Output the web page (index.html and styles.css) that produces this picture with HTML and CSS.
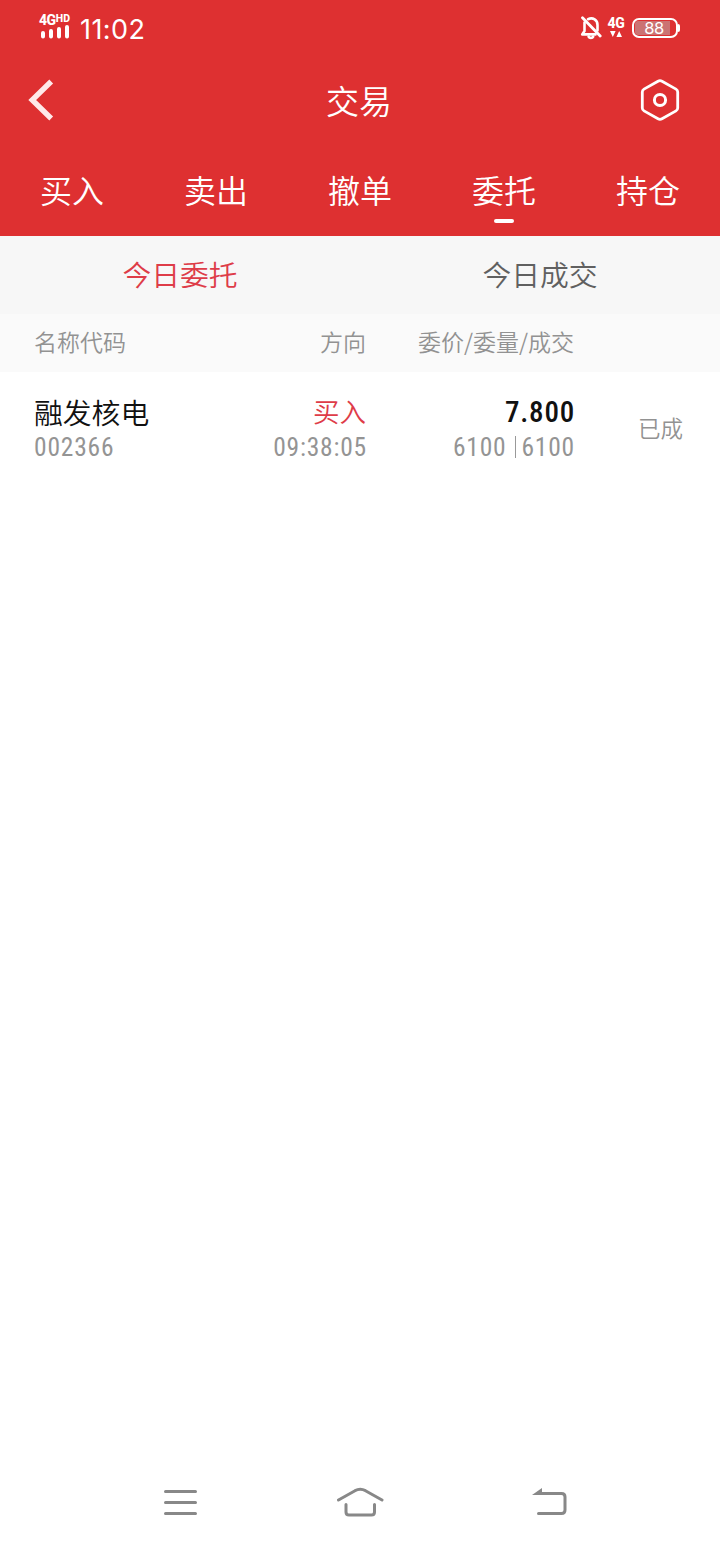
FILE: index.html
```html
<!DOCTYPE html>
<html lang="zh-CN">
<head>
    <meta charset="UTF-8">
    <meta name="viewport" content="width=device-width, initial-scale=1.0">
    <title>交易</title>
    <link rel="stylesheet" href="styles.css">
</head>
<body>
    <header class="cabecera">
        <div class="estado">
            <div class="red">
                <div class="red-texto">4G<span class="hd">HD</span></div>
                <svg class="barras" width="30" height="14" viewBox="0 0 30 14" fill="none" stroke="#fff" stroke-width="4" stroke-linecap="round">
                    <path d="M4 8V11.4M12 6V11.4M20 4V11.4M28 2V11.4"/>
                </svg>
            </div>
            <span class="hora">11:02</span>
            <svg class="campana" width="22" height="24" viewBox="0 0 22 24" fill="none" stroke="#fff" stroke-width="2.6" stroke-linecap="round" stroke-linejoin="round">
                <path d="M8 3.2C13 .9 17.5 4.2 17.5 9V14.5M4.5 6.5V15L2.2 18.4H15.5"/>
                <path d="M8.6 20.6C9.4 22.3 12.4 22.3 13.2 20.6"/>
                <path d="M2.5 1.8L20.2 20" stroke-width="2.8"/>
            </svg>
            <div class="datos">
                <span class="datos-texto">4G</span>
                <svg width="12" height="6" viewBox="0 0 12 6" fill="#fff">
                    <path d="M0 0H5.6L2.8 6ZM6.4 6H12L9.2 0Z"/>
                </svg>
            </div>
            <div class="bateria"><span class="carga">88</span></div>
            <span class="polo"></span>
        </div>
        <div class="titulo">
            <svg width="26" height="42" viewBox="0 0 26 42" fill="none" stroke="#ffe9e9" stroke-width="5.4">
                <path d="M23.2 2.5L4.2 21L23.2 39.5"/>
            </svg>
            <h1>交易</h1>
            <svg width="40" height="42" viewBox="0 0 40 42" fill="none" stroke="#fff" stroke-width="2.8" stroke-linejoin="round">
                <path d="M18 2.2Q20 1.1 22 2.2L36 10.1Q37.7 11.1 37.7 13V29Q37.7 30.9 36 31.9L22 39.8Q20 40.9 18 39.8L4 31.9Q2.3 30.9 2.3 29V13Q2.3 11.1 4 10.1Z"/>
                <circle cx="20" cy="21" r="5.6" stroke-width="3"/>
            </svg>
        </div>
        <nav class="menu">
            <a class="opcion">买入</a>
            <a class="opcion">卖出</a>
            <a class="opcion">撤单</a>
            <a class="opcion activa">委托</a>
            <a class="opcion">持仓</a>
        </nav>
    </header>

    <div class="pestanas">
        <a class="pestana elegida">今日委托</a>
        <a class="pestana">今日成交</a>
    </div>

    <main class="tabla">
        <div class="fila encabezado">
            <span>名称代码</span>
            <span class="derecha">方向</span>
            <span class="derecha">委价/委量/成交</span>
            <span></span>
        </div>
        <div class="fila orden">
            <div>
                <div class="nombre">融发核电</div>
                <div class="numero">002366</div>
            </div>
            <div class="derecha">
                <div class="compra">买入</div>
                <div class="numero tiempo">09:38:05</div>
            </div>
            <div class="derecha">
                <div class="precio">7.800</div>
                <div class="numero cantidades"><span>6100</span><i class="raya"></i><span>6100</span></div>
            </div>
            <div class="derecha situacion">已成</div>
        </div>
    </main>

    <footer class="sistema">
        <svg width="34" height="28" viewBox="0 0 34 28" stroke="#888" stroke-width="3" stroke-linecap="round">
            <path d="M1.5 3.5H31.5M1.5 14.5H31.5M1.5 25.5H31.5"/>
        </svg>
        <svg class="inicio" width="48" height="30" viewBox="0 0 48 30" fill="none" stroke="#888" stroke-width="3" stroke-linecap="round">
            <path d="M2.5 13L19 3.7Q24.2 1 29.5 3.7L46 13"/>
            <path d="M10 17.5V25Q10 28 13 28H35.5Q38.5 28 38.5 25V17.5"/>
        </svg>
        <svg width="36" height="28" viewBox="0 0 36 28" fill="none" stroke="#888" stroke-width="3" stroke-linecap="round">
            <path d="M8 5.5H29.5Q33 5.5 33 9V22Q33 25.5 29.5 25.5H6.5"/>
            <path d="M0 7L10 0V7Z" fill="#888" stroke="none"/>
        </svg>
    </footer>
</body>
</html>
```
FILE: styles.css
```css
*{
    margin: 0;
    padding: 0;
    box-sizing: border-box;
}
body{
    display: flex;
    flex-direction: column;
    height: 100vh;
    background: white;
    font-family: "Noto Sans CJK SC", sans-serif;
    font-weight: 350;
}
svg{
    display: block;
    flex: none;
}
.cabecera{
    height: 236px;
    background: #de3031;
    color: white;
}
.estado{
    height: 56px;
    padding: 0 40px 0 39px;
    display: flex;
    align-items: center;
    font-family: Roboto, sans-serif;
}
.red{
    width: 32px;
    height: 28px;
}
.red-texto{
    height: 11px;
    display: flex;
    font-size: 14px;
    font-weight: 800;
    line-height: 13px;
    letter-spacing: -0.5px;
}
.hd{
    font-size: 10.5px;
    line-height: 9px;
    letter-spacing: 0.3px;
}
.hora{
    flex: 1;
    padding: 4px 0 0 9px;
    font-family: Inter, sans-serif;
    font-size: 27px;
    font-weight: 400;
    line-height: 32px;
    letter-spacing: 0.4px;
}
.campana{
    margin-right: 5px;
}
.datos{
    width: 18px;
    height: 22px;
    display: flex;
    flex-direction: column;
    align-items: center;
    gap: 2px;
}
.datos-texto{
    font-size: 14px;
    font-weight: 800;
    line-height: 12px;
    letter-spacing: -0.3px;
}
.bateria{
    width: 46px;
    height: 20px;
    margin-left: 7px;
    padding: 1px;
    border: 2px solid white;
    border-radius: 7px;
}
.carga{
    display: block;
    width: 35px;
    height: 14px;
    padding-left: 3px;
    border-radius: 3px 0 0 3px;
    background: #cb7373;
    font-family: Inter, sans-serif;
    font-size: 16.5px;
    font-weight: 400;
    line-height: 14px;
    letter-spacing: -0.5px;
    text-align: center;
}
.polo{
    width: 2px;
    height: 8px;
    border-radius: 0 2px 2px 0;
    background: white;
}
.titulo{
    height: 88px;
    padding: 0 40px 0 28px;
    display: grid;
    grid-template-columns: 40px 1fr 40px;
    align-items: center;
}
h1{
    font-size: 33px;
    font-weight: 350;
    text-align: center;
    padding-left: 10px;
}
.menu{
    height: 92px;
    display: flex;
}
.opcion{
    flex: 1;
    height: 79px;
    display: flex;
    flex-direction: column;
    align-items: center;
    padding-top: 21px;
    font-size: 32px;
    line-height: 48px;
}
.activa::after{
    content: "";
    width: 20px;
    height: 4px;
    margin-top: 6px;
    border-radius: 2px;
    background: white;
}
.pestanas{
    height: 78px;
    display: flex;
    background: #f7f7f7;
}
.pestana{
    flex: 1;
    text-align: center;
    font-size: 28.8px;
    line-height: 75px;
    color: #606060;
}
.elegida{
    color: #de3c48;
}
.fila{
    display: grid;
    grid-template-columns: 132px 200px 208px 110px;
    padding: 0 36px 0 34px;
}
.encabezado{
    height: 58px;
    background: #fafafa;
    font-size: 23px;
    line-height: 55px;
    color: #929292;
}
.derecha{
    text-align: right;
}
.orden{
    height: 108px;
    padding-top: 20px;
}
.nombre{
    height: 40px;
    font-size: 28.8px;
    line-height: 39px;
    color: #111;
}
.compra{
    height: 40px;
    font-size: 26.5px;
    line-height: 37px;
    color: #de3c48;
}
.numero{
    height: 32px;
    font-family: Roboto, sans-serif;
    font-size: 25.5px;
    font-stretch: 80%;
    font-weight: 450;
    line-height: 30px;
    letter-spacing: 0.8px;
    color: #949494;
}
.tiempo{
    margin-right: -1px;
}
.precio{
    height: 40px;
    margin-right: -1px;
    font-family: Roboto, sans-serif;
    font-size: 29px;
    font-stretch: 75%;
    font-weight: 500;
    line-height: 40px;
    letter-spacing: 0.8px;
    color: #111;
}
.cantidades{
    height: 30px;
    margin-right: -1px;
    display: flex;
    align-items: center;
    justify-content: flex-end;
}
.raya{
    width: 1px;
    height: 22px;
    margin: 0 5px 0 9px;
    background: #999;
}
.situacion{
    font-size: 22.5px;
    line-height: 70px;
    padding-right: 1px;
    color: #929292;
}
.sistema{
    height: 84px;
    margin-top: auto;
    padding: 0 152px 0 164px;
    display: flex;
    align-items: center;
    justify-content: space-between;
}
.inicio{
    margin: 0 5px 1px -5px;
}
```
